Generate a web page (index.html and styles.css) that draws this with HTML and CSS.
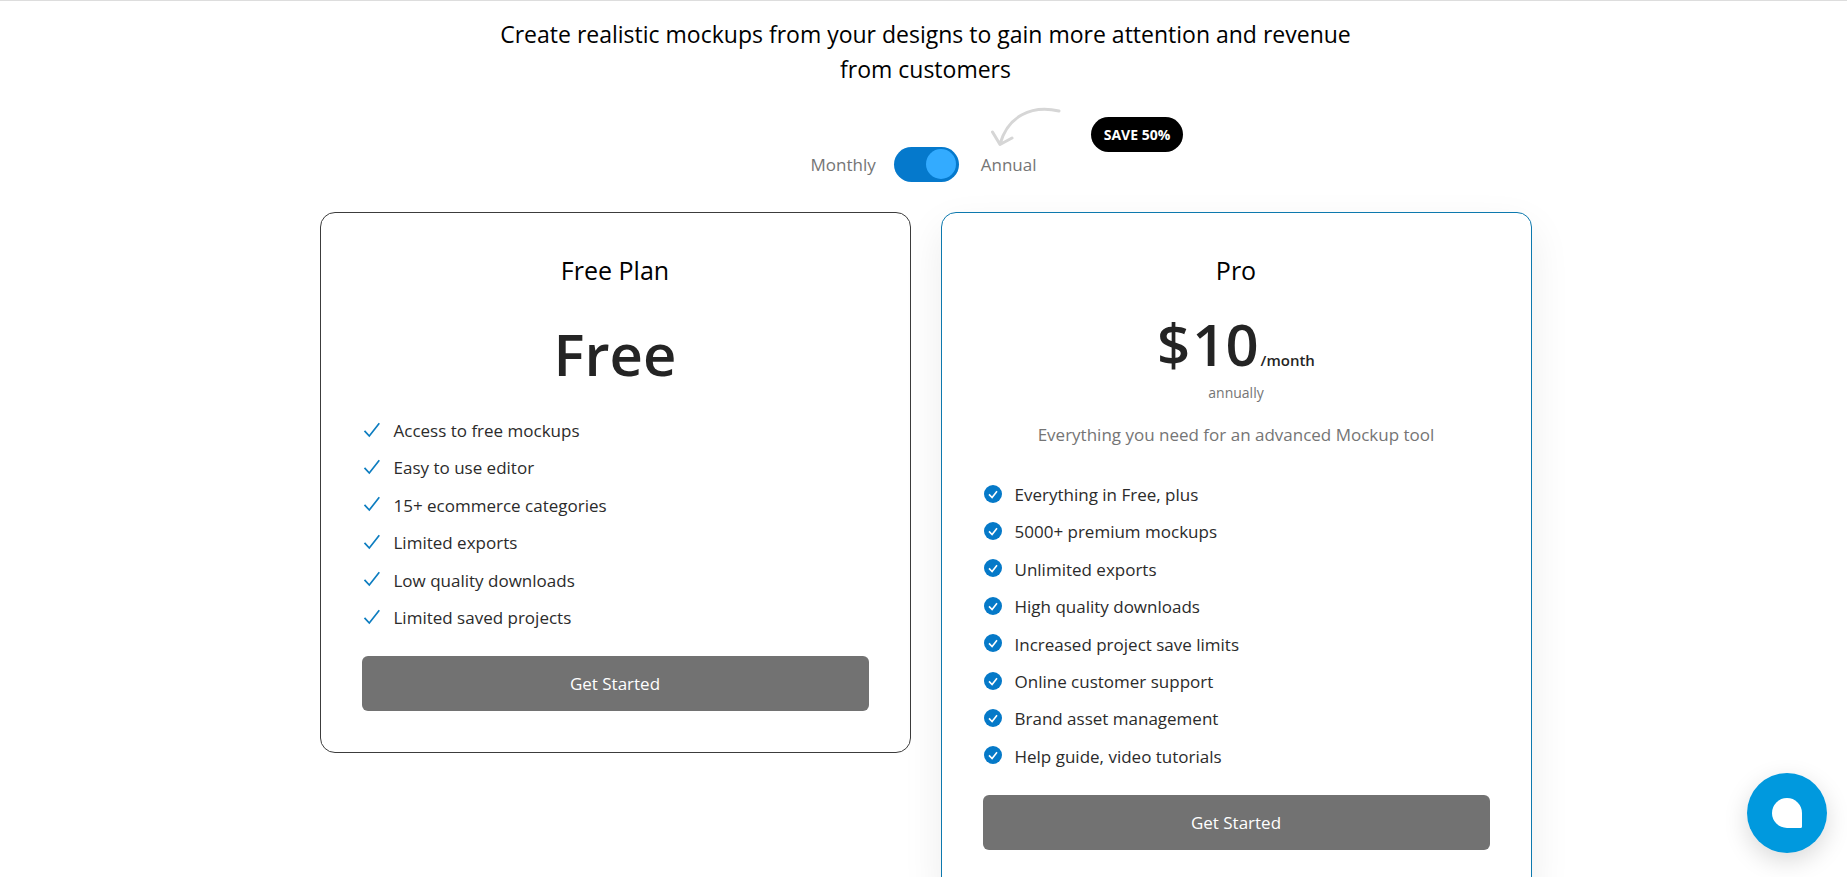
FILE: index.html
```html
<!DOCTYPE html>
<html lang="en">
<head>
<meta charset="utf-8">
<meta name="viewport" content="width=device-width, initial-scale=1">
<title>Pricing</title>
<link rel="stylesheet" href="styles.css">
</head>
<body>
<svg class="sprite" aria-hidden="true">
  <symbol id="tick" viewBox="0 0 18 18"><path d="M1.5 9.8 6.3 15 16.3 2.2" fill="none" stroke="#0d7dc0" stroke-width="1.7"/></symbol>
  <symbol id="tick-round" viewBox="0 0 18 18"><circle cx="9" cy="9" r="9" fill="#0579c8"/><path d="M5 9.4 8.1 12.5 13 6.2" fill="none" stroke="#fff" stroke-width="1.6"/></symbol>
</svg>
<main class="pricing">
  <h2 class="lead">Create realistic mockups from your designs to gain more attention and revenue from customers</h2>

  <div class="billing">
    <label for="annual">Monthly</label>
    <input class="switch" type="checkbox" role="switch" id="annual" checked>
    <div class="annual">
      <label for="annual">Annual</label>
      <svg class="arrow" viewBox="0 0 70 40" aria-hidden="true"><path d="M68 4C40-2 17 9 9 37M1.500 25 9 37.500 21 31" fill="none" stroke="#d6d6d6" stroke-width="3" stroke-linejoin="round" stroke-linecap="round"/></svg>
      <span class="badge">SAVE 50%</span>
    </div>
  </div>

  <div class="plans">
    <section class="plan">
      <h3>Free Plan</h3>
      <p class="price price-free">Free</p>
      <ul class="features">
        <li><svg><use href="#tick"/></svg>Access to free mockups</li>
        <li><svg><use href="#tick"/></svg>Easy to use editor</li>
        <li><svg><use href="#tick"/></svg>15+ ecommerce categories</li>
        <li><svg><use href="#tick"/></svg>Limited exports</li>
        <li><svg><use href="#tick"/></svg>Low quality downloads</li>
        <li><svg><use href="#tick"/></svg>Limited saved projects</li>
      </ul>
      <button class="start" type="button">Get Started</button>
    </section>

    <section class="plan plan-pro">
      <h3>Pro</h3>
      <p class="price"><span>$</span><span>10</span><small>/month</small></p>
      <p class="period">annually</p>
      <p class="about">Everything you need for an advanced Mockup tool</p>
      <ul class="features">
        <li><svg><use href="#tick-round"/></svg>Everything in Free, plus</li>
        <li><svg><use href="#tick-round"/></svg>5000+ premium mockups</li>
        <li><svg><use href="#tick-round"/></svg>Unlimited exports</li>
        <li><svg><use href="#tick-round"/></svg>High quality downloads</li>
        <li><svg><use href="#tick-round"/></svg>Increased project save limits</li>
        <li><svg><use href="#tick-round"/></svg>Online customer support</li>
        <li><svg><use href="#tick-round"/></svg>Brand asset management</li>
        <li><svg><use href="#tick-round"/></svg>Help guide, video tutorials</li>
      </ul>
      <button class="start" type="button">Get Started</button>
    </section>
  </div>
</main>
<button class="chat" type="button" aria-label="Open chat"><svg viewBox="0 0 30 30"><path d="M15 0a15 15 0 0 1 15 15v13.500a1.500 1.500 0 0 1-1.500 1.500H15a15 15 0 0 1 0-30z" fill="#fff"/></svg></button>
</body>
</html>
```
FILE: styles.css
```css
* { box-sizing: border-box; }

html { overflow-x: hidden; scrollbar-width: none; }

body {
  margin: 0;
  border-top: 1px solid #ddd;
  background: #fff;
  color: #2b2b2b;
  font-family: "Open Sans", "Noto Sans", sans-serif;
  font-size: 17px;
}

h2, h3, p, ul { margin: 0; padding: 0; font-weight: inherit; }

.sprite { position: absolute; width: 0; height: 0; }

.pricing { padding: 16px 16px 0 20px; }

.lead {
  max-width: 880px;
  margin: 0 auto;
  color: #000;
  font-size: 23px;
  line-height: 35px;
  text-align: center;
}

.billing {
  display: flex;
  align-items: center;
  justify-content: center;
  gap: 18px;
  margin: 60px 4px 30px 0;
  color: #757575;
}

.switch {
  appearance: none;
  width: 65px;
  height: 35px;
  margin: 0;
  padding: 2px 3px;
  border-radius: 18px;
  background: #0579cc;
  cursor: pointer;
}

.switch::before {
  content: "";
  display: block;
  width: 30px;
  height: 30px;
  border-radius: 50%;
  background: #33abff;
}

.switch:checked::before { margin-left: auto; }

.annual { position: relative; padding-left: 4px; }

.arrow {
  position: absolute;
  left: 14px;
  bottom: 29px;
  width: 70px;
  height: 40px;
}

.badge {
  position: absolute;
  left: 114px;
  bottom: 24px;
  padding: 0 13px;
  border-radius: 18px;
  background: #000;
  color: #fff;
  font-size: 14px;
  font-weight: 700;
  line-height: 35px;
  white-space: nowrap;
}

.plans {
  display: grid;
  grid-template-columns: 1fr 1fr;
  align-items: start;
  gap: 30px;
  max-width: 1212px;
  margin: 0 auto;
}

.plan {
  padding: 39px 41px 41px;
  border: 1px solid #3c3c3c;
  border-radius: 15px;
  background: #fff;
}

.plan-pro {
  border-color: #0d79ae;
  box-shadow: 0 16px 40px rgba(0, 0, 0, .08);
}

.plan h3 {
  color: #000;
  font-size: 25px;
  line-height: 36px;
  text-align: center;
}

.price {
  display: flex;
  align-items: baseline;
  justify-content: center;
  gap: 2px;
  margin-top: 22px;
  color: #242424;
  font-size: 58px;
  font-weight: 600;
  line-height: 68px;
}

.price small { font-size: 15px; line-height: 20px; }

.price-free { margin: 32px 0 24px; }

.period {
  margin-top: 5px;
  color: #757575;
  font-size: 14px;
  line-height: 20px;
  text-align: center;
}

.about {
  margin: 20px 0 29px;
  color: #757575;
  line-height: 24px;
  text-align: center;
}

.features { padding-left: 1px; list-style: none; line-height: 2.2; }

.features li { display: flex; align-items: center; gap: 13px; }

.features svg { width: 18px; height: 18px; margin-bottom: 2px; }

.start {
  display: block;
  width: 100%;
  height: 55px;
  margin-top: 20px;
  border: 0;
  border-radius: 6px;
  background: #727272;
  color: #fff;
  font: inherit;
  cursor: pointer;
}

.chat {
  position: fixed;
  right: 20px;
  bottom: 24px;
  width: 80px;
  height: 80px;
  padding: 0;
  border: 0;
  border-radius: 50%;
  background: #0099de;
  box-shadow: 0 8px 24px rgba(0, 0, 0, .15);
  cursor: pointer;
}

.chat svg { display: block; width: 30px; height: 30px; margin: 0 auto; }
```
